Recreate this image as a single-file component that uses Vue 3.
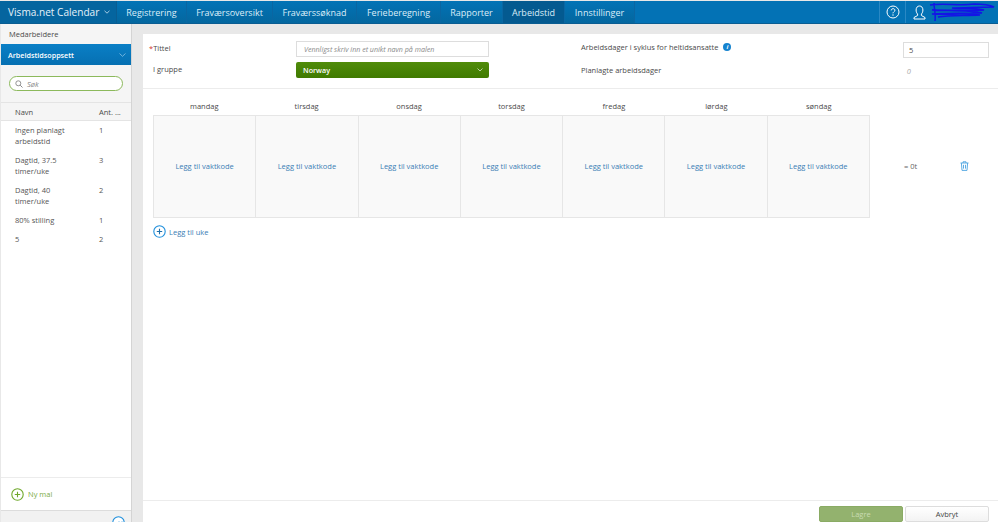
<script setup>
const navItems = [
  { label: 'Registrering', width: 70 },
  { label: 'Fraværsoversikt', width: 86 },
  { label: 'Fraværssøknad', width: 84 },
  { label: 'Ferieberegning', width: 84 },
  { label: 'Rapporter', width: 62 },
  { label: 'Arbeidstid', width: 62, active: true },
  { label: 'Innstillinger', width: 70 }
]
const templates = [
  { name: 'Ingen planlagt arbeidstid', count: 1 },
  { name: 'Dagtid, 37.5 timer/uke', count: 3 },
  { name: 'Dagtid, 40 timer/uke', count: 2 },
  { name: '80% stilling', count: 1 },
  { name: '5', count: 2 }
]
const days = ['mandag', 'tirsdag', 'onsdag', 'torsdag', 'fredag', 'lørdag', 'søndag']
</script>

<template>
  <div class="app">
    <header class="topbar">
      <div class="brand">Visma.net Calendar <svg class="chev" width="6" height="4" viewBox="0 0 6 4"><path d="M.5.8 3 3.2 5.500.8" fill="none" stroke="#cfe6f5" stroke-width=".8"/></svg></div>
      <nav class="nav">
        <a v-for="item in navItems" :key="item.label" class="nav-item" :class="{ active: item.active }" :style="{ width: item.width + 'px' }">{{ item.label }}</a>
      </nav>
      <div class="top-right">
        <div class="help">
          <svg width="14" height="14" viewBox="0 0 14 14"><circle cx="7" cy="7" r="6" fill="none" stroke="#fff" stroke-width="1"/><path d="M5.200 5.400c0-2.300 3.700-2.300 3.700-.1 0 1.400-1.900 1.500-1.900 3" fill="none" stroke="#fff"/><circle cx="7" cy="10" r=".7" fill="#fff"/></svg>
        </div>
        <div class="user">
          <svg width="13" height="15" viewBox="0 0 13 15"><path d="M4.600 9c-1-1-1.500-2.300-1.500-4C3.100 2.500 4.500 1 6.500 1s3.400 1.500 3.400 4c0 1.700-.5 3-1.500 4v1.500l3.600 2V14H1v-1.500l3.600-2z" fill="none" stroke="#fff"/></svg>
          <svg class="scribble" width="66" height="20" viewBox="0 0 66 20"><path d="M1 3c14-2 30 1 44-1 7 0 14 0 20 3-14 0-30 1-42 1 8 1 24 0 32 2-12 1-30 0-52 0 14 1 38 0 50 3-14 0-34 0-50 1 14 1 32-1 48 1-14 1-30 0-42 2M5 1c0 6 2 12 1 18" fill="none" stroke="#1414e6" stroke-width="1.500"/></svg>
        </div>
      </div>
    </header>

    <div class="body">
      <aside class="sidebar">
        <div class="side-link">Medarbeidere</div>
        <div class="side-active">
          <span>Arbeidstidsoppsett</span>
          <svg width="7" height="4" viewBox="0 0 7 4"><path d="M.5.500 3.500 3.300 6.500.500" fill="none" stroke="#8cc3e6" stroke-width=".8"/></svg>
        </div>
        <div class="search-wrap">
          <div class="search">
            <svg width="8" height="8" viewBox="0 0 8 8"><circle cx="3.300" cy="3.300" r="2.500" fill="none" stroke="#888" stroke-width=".9"/><path d="M5.200 5.200 7.500 7.500" stroke="#888"/></svg>
            <span>Søk</span>
          </div>
        </div>
        <div class="list-head"><span class="c-name">Navn</span><span class="c-count">Ant. ...</span></div>
        <div class="list">
          <div v-for="t in templates" :key="t.name" class="list-row">
            <span class="c-name">{{ t.name }}</span><span class="c-count">{{ t.count }}</span>
          </div>
        </div>
        <div class="new-row">
          <svg width="13" height="13" viewBox="0 0 13 13"><circle cx="6.500" cy="6.500" r="5.700" fill="none" stroke="#6fa82b" stroke-width="1.100"/><path d="M6.500 3.800v5.400M3.800 6.500h5.400" stroke="#6fa82b" stroke-width="1.100"/></svg>
          <span>Ny mal</span>
        </div>
        <div class="side-foot">
          <svg width="13" height="13" viewBox="0 0 13 13"><circle cx="6.500" cy="6.500" r="5.700" fill="#fff" stroke="#1f8fdc" stroke-width="1.100"/><path d="M3.500 6.500 5 8l2-2.500M6.500 6.500 8 8l2-2.500" fill="none" stroke="#1f8fdc"/></svg>
        </div>
      </aside>

      <main class="content">
        <section class="form">
          <div class="form-left">
            <div class="f-row">
              <label class="f-label"><i>*</i>Tittel</label>
              <input class="f-input" placeholder="Vennligst skriv inn et unikt navn på malen" />
            </div>
            <div class="f-row">
              <label class="f-label indent">I gruppe</label>
              <div class="select">
                <span>Norway</span>
                <svg width="6" height="4" viewBox="0 0 6 4"><path d="M.5.500 3 3 5.500.5" fill="none" stroke="#d6e6c4" stroke-width=".8"/></svg>
              </div>
            </div>
          </div>
          <div class="form-right">
            <div class="r-row">
              <span class="r-label">Arbeidsdager i syklus for heltidsansatte</span>
              <span class="info">i</span>
              <span class="num-box">5</span>
            </div>
            <div class="r-row second">
              <span class="r-label">Planlagte arbeidsdager</span>
              <span class="zero">0</span>
            </div>
          </div>
        </section>

        <section class="schedule">
          <div class="days">
            <span v-for="d in days" :key="d" class="day">{{ d }}</span>
          </div>
          <div class="week">
            <div class="cells">
              <div v-for="d in days" :key="d" class="cell">Legg til vaktkode</div>
            </div>
            <span class="total">= 0t</span>
            <svg class="trash" width="9" height="10" viewBox="0 0 9 10"><path d="M.5 2h8M3 2V.8h3V2M1.400 2l.6 7.400h5L7.600 2M3.500 3.800v3.800M5.500 3.800v3.800" fill="none" stroke="#4aa3e0" stroke-width=".9"/></svg>
          </div>
          <div class="add-week">
            <svg width="13" height="13" viewBox="0 0 13 13"><circle cx="6.500" cy="6.500" r="5.700" fill="none" stroke="#1f8fdc" stroke-width="1.100"/><path d="M6.500 3.800v5.400M3.800 6.500h5.400" stroke="#1f6fa8" stroke-width="1.100"/></svg>
            <span>Legg til uke</span>
          </div>
        </section>

        <footer class="actions">
          <button class="btn save">Lagre</button>
          <button class="btn cancel">Avbryt</button>
        </footer>
      </main>
    </div>
  </div>
</template>

<style>
html, body { margin: 0; overflow: hidden; background: #e8e8e8; }
</style>

<style scoped>
.app { width: 998px; height: 522px; display: flex; flex-direction: column; font-family: "Open Sans", sans-serif; font-size: 7.5px; color: #4a4a4a; overflow: hidden; background: #e8e8e8; }
.topbar { height: 22px; margin-top: 1px; flex: none; display: flex; align-items: stretch; background: #0372b5; color: #dcedf8; border-bottom: 1px solid #0a5d92; box-sizing: content-box; }
.brand { width: 117px; display: flex; align-items: center; gap: 5px; padding-left: 8px; box-sizing: border-box; font-size: 10.100px; color: #e6f2fa; background: #05659f; border-right: 1px solid #0a5d92; white-space: nowrap; }
.nav { display: flex; }
.nav-item { display: flex; align-items: center; justify-content: center; font-size: 9px; border-right: 1px solid #0a66a2; box-sizing: border-box; background: linear-gradient(#0273b6, #04679f); white-space: nowrap; }
.nav-item.active { background: #045a90; }
.top-right { margin-left: auto; display: flex; }
.help { width: 26px; border-left: 1px solid #2a88c4; display: flex; align-items: center; justify-content: center; box-sizing: border-box; }
.user { width: 93px; border-left: 1px solid #2a88c4; display: flex; align-items: center; padding-left: 7px; box-sizing: border-box; gap: 3px; }
.body { flex: 1; display: flex; min-height: 0; }
.sidebar { width: 131px; margin-left: 1px; flex: none; display: flex; flex-direction: column; background: #fff; border-right: 1px solid #d4d4d4; box-sizing: border-box; }
.side-link { height: 20px; flex: none; display: flex; align-items: center; padding-left: 8px; background: #f5f5f5; }
.side-active { height: 21px; flex: none; display: flex; align-items: center; justify-content: space-between; padding: 0 5px 0 7px; background: linear-gradient(#0a7fc6, #0670b2); color: #fff; font-size: 7.200px; font-weight: 600; }
.search-wrap { height: 38px; flex: none; display: flex; align-items: center; padding-left: 8px; background: #f5f5f5; border-bottom: 1px solid #e4e4e4; box-sizing: border-box; }
.search { width: 114px; height: 15px; box-sizing: border-box; border: 1px solid #8cb95c; border-radius: 8px; background: #fff; display: flex; align-items: center; gap: 4px; padding-left: 5px; font-style: italic; color: #888; font-size: 7.500px; }
.list-head { height: 18px; display: flex; align-items: center; padding-left: 14px; background: #f5f5f5; border-bottom: 1px solid #e4e4e4; flex: none; box-sizing: border-box; }
.c-name { width: 84px; flex: none; }
.c-count { flex: none; white-space: nowrap; }
.list { flex: 1; padding-top: 4px; }
.list-row { display: flex; padding: 0 14px; margin-bottom: 8px; line-height: 11px; color: #555; }
.list-row .c-name { width: 70px; margin-right: 14px; }
.new-row { height: 33px; flex: none; border-top: 1px solid #ececec; display: flex; align-items: center; gap: 4px; padding-left: 10px; color: #7cab49; box-sizing: border-box; }
.side-foot { height: 12px; flex: none; background: #f1f1f1; border-top: 1px solid #dcdcdc; padding-right: 6px; display: flex; justify-content: flex-end; overflow: hidden; box-sizing: border-box; }
.side-foot svg { margin-top: 5px; flex: none; }
.content { width: 855px; margin: 10px 0 0 11px; flex: none; background: #fff; display: flex; flex-direction: column; }
.form { height: 55px; flex: none; display: flex; border-bottom: 1px solid #ececec; box-sizing: border-box; }
.form-left { width: 346px; padding: 7px 0 0 6px; box-sizing: border-box; }
.f-row { display: flex; align-items: center; margin-bottom: 5px; height: 16px; }
.f-label { width: 147px; flex: none; margin-top: -2px; }
.f-label i { color: #d0342c; font-style: normal; }
.f-label.indent { padding-left: 4px; box-sizing: border-box; }
.f-input { width: 193px; height: 16px; box-sizing: border-box; border: 1px solid #ddd; padding: 0 7px; font: italic 7.100px "Open Sans", sans-serif; color: #777; outline: none; }
.f-input::placeholder { color: #8a8a8a; opacity: 1; }
.select { width: 193px; height: 16px; box-sizing: border-box; background: linear-gradient(#508c0a, #407a00); border-radius: 2px; color: #fff; display: flex; align-items: center; justify-content: space-between; padding: 0 6px 0 7px; font-size: 7.200px; font-weight: 600; }
.form-right { flex: 1; padding: 6px 0 0 92px; box-sizing: border-box; }
.r-row { display: flex; align-items: center; height: 14px; position: relative; }
.r-row.second { margin-top: 9px; }
.r-label { white-space: nowrap; }
.info { width: 8px; height: 8px; border-radius: 50%; background: #1583cf; color: #fff; font-size: 6px; font-weight: 700; font-style: italic; display: inline-flex; align-items: center; justify-content: center; margin-left: 5px; margin-top: -1px; }
.num-box { width: 86px; height: 16px; box-sizing: border-box; border: 1px solid #ddd; padding-left: 5px; display: flex; align-items: center; position: absolute; right: 9px; top: 2px; }
.zero { position: absolute; right: 87px; font-style: italic; color: #aaa; top: 3px; }
.schedule { flex: 1; padding-left: 10px; min-height: 0; }
.days { display: flex; width: 717px; height: 26px; align-items: flex-end; padding-bottom: 4px; box-sizing: border-box; }
.day { flex: 1; text-align: center; }
.week { display: flex; align-items: center; }
.cells { display: flex; width: 717px; height: 103px; flex: none; border: 1px solid #e6e6e6; box-sizing: border-box; background: #f9f9f9; }
.cell { flex: 1; display: flex; align-items: center; justify-content: center; border-right: 1px solid #e6e6e6; color: #3a7eb5; padding-bottom: 2px; box-sizing: border-box; }
.cell:last-child { border-right: none; }
.total { margin-left: 34px; width: 56px; color: #666; flex: none; margin-bottom: 2px; }
.trash { flex: none; margin-bottom: 2px; }
.add-week { display: flex; align-items: center; gap: 3px; margin-top: 7px; color: #3a7eb5; }
.actions { height: 22px; flex: none; border-top: 1px solid #ececec; display: flex; justify-content: flex-end; align-items: flex-start; gap: 2px; padding: 5px 9px 0 0; box-sizing: border-box; }
.btn { width: 84px; height: 16px; box-sizing: border-box; font: 7.500px "Open Sans", sans-serif; border-radius: 2px; padding: 0; }
.save { background: #93b26e; border: 1px solid #8aab64; color: #c9dcb2; }
.cancel { background: linear-gradient(#fff, #f3f3f3); border: 1px solid #ddd; color: #444; }
</style>
